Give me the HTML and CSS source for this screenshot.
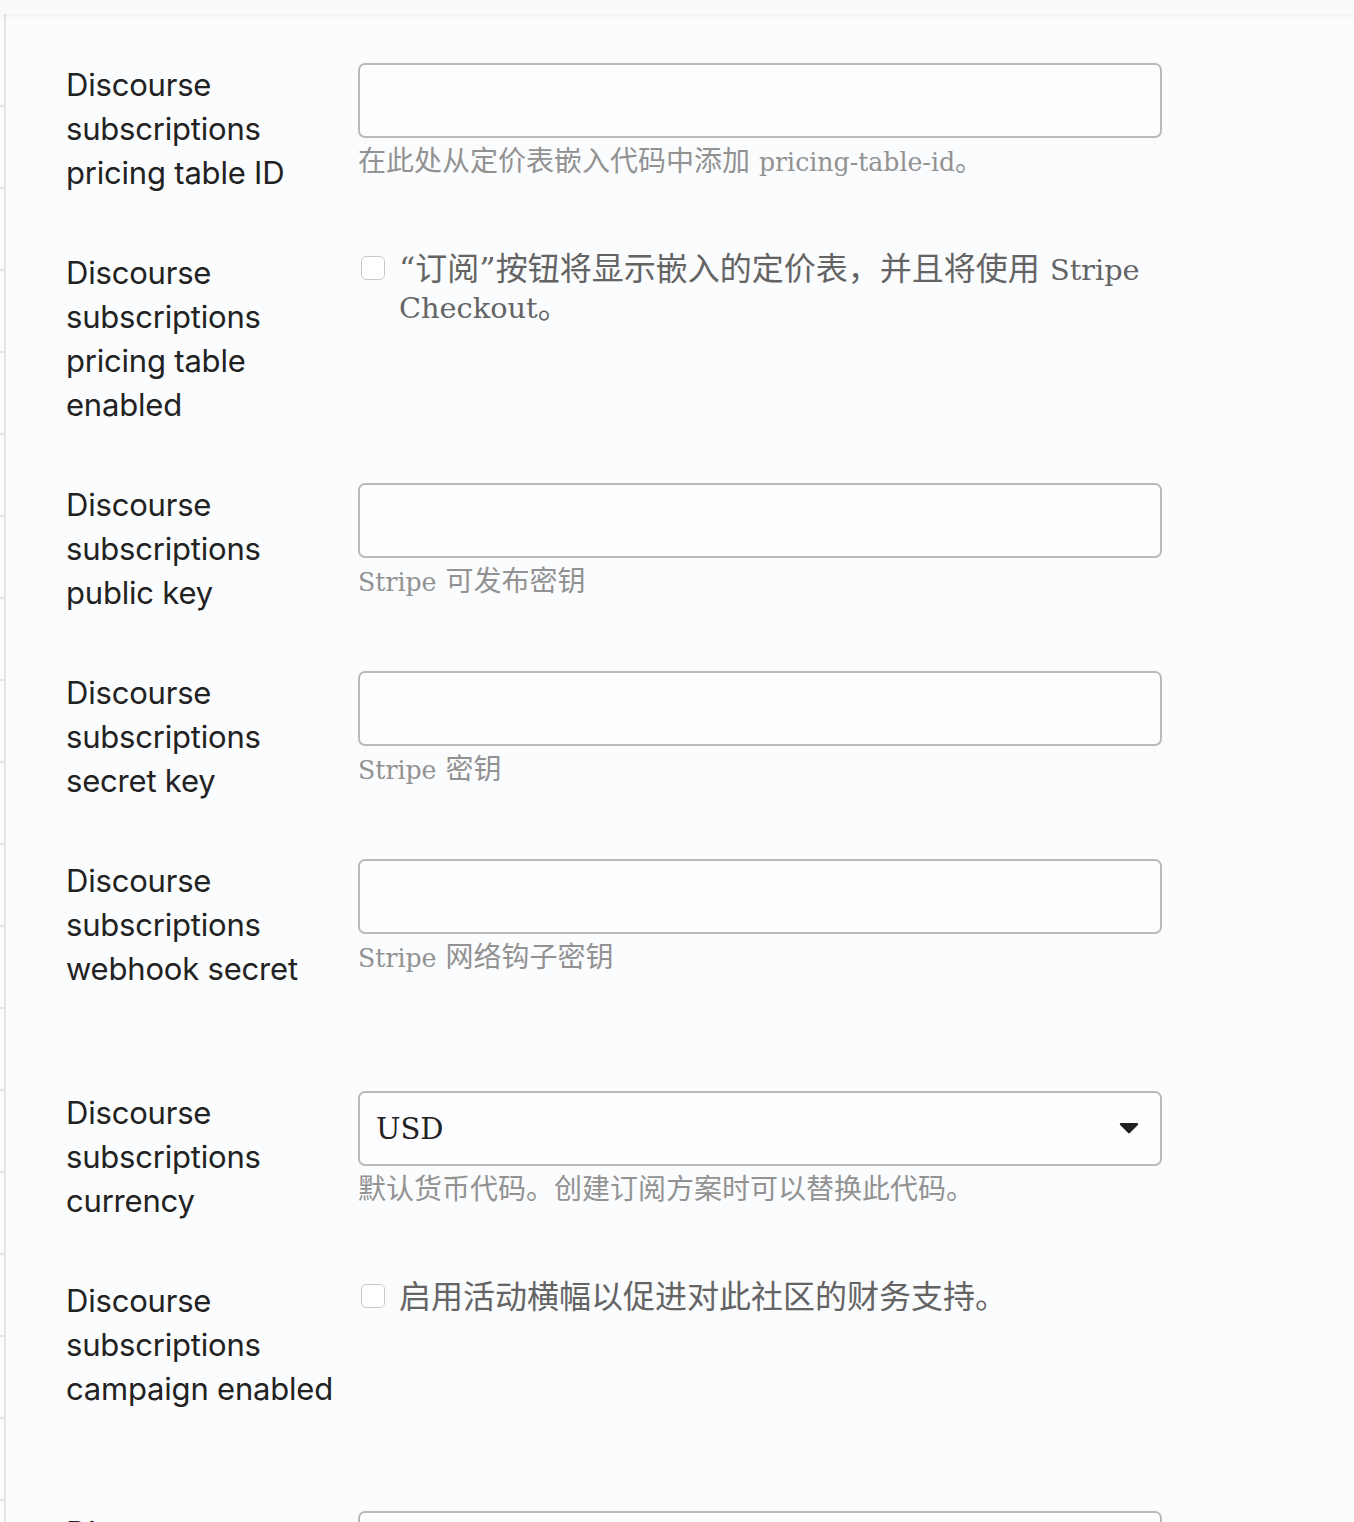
FILE: index.html
```html
<!DOCTYPE html>
<html lang="zh-CN">
<head>
<meta charset="utf-8">
<title>Settings</title>
<link rel="stylesheet" href="styles.css">
</head>
<body>
<header class="topbar"></header>
<div class="layout">
  <nav class="rail">
    <span class="rail-item"></span><span class="rail-item"></span><span class="rail-item"></span>
    <span class="rail-item"></span><span class="rail-item"></span><span class="rail-item"></span>
    <span class="rail-item"></span><span class="rail-item"></span><span class="rail-item"></span>
    <span class="rail-item"></span><span class="rail-item"></span><span class="rail-item"></span>
    <span class="rail-item"></span><span class="rail-item"></span><span class="rail-item"></span>
    <span class="rail-item"></span><span class="rail-item"></span><span class="rail-item"></span>
  </nav>
  <main class="settings">
    <div class="row">
      <div class="label">Discourse subscriptions pricing table ID</div>
      <div class="value">
        <div class="input"></div>
        <div class="help">在此处从定价表嵌入代码中添加 <span class="lat">pricing-table-id</span>。</div>
      </div>
    </div>

    <div class="row">
      <div class="label">Discourse subscriptions pricing table enabled</div>
      <div class="value check">
        <span class="box"></span>
        <div class="check-text">“订阅”按钮将显示嵌入的定价表，并且将使用 <span class="lat">Stripe Checkout</span>。</div>
      </div>
    </div>

    <div class="row">
      <div class="label">Discourse subscriptions public key</div>
      <div class="value">
        <div class="input"></div>
        <div class="help"><span class="lat">Stripe</span> 可发布密钥</div>
      </div>
    </div>

    <div class="row">
      <div class="label">Discourse subscriptions secret key</div>
      <div class="value">
        <div class="input"></div>
        <div class="help"><span class="lat">Stripe</span> 密钥</div>
      </div>
    </div>

    <div class="row row-spaced">
      <div class="label">Discourse subscriptions webhook secret</div>
      <div class="value">
        <div class="input"></div>
        <div class="help"><span class="lat">Stripe</span> 网络钩子密钥</div>
      </div>
    </div>

    <div class="row">
      <div class="label">Discourse subscriptions currency</div>
      <div class="value">
        <div class="input select">
          <span class="select-text lat">USD</span>
          <svg class="caret" width="20" height="13" viewBox="0 0 20 13"><path d="M2 1h16a1.2 1.2 0 0 1 .85 2.05l-8 8a1.2 1.2 0 0 1-1.7 0l-8-8A1.2 1.2 0 0 1 2 1z" fill="#1f1f1f"/></svg>
        </div>
        <div class="help">默认货币代码。创建订阅方案时可以替换此代码。</div>
      </div>
    </div>

    <div class="row row-spaced">
      <div class="label">Discourse subscriptions campaign enabled</div>
      <div class="value check">
        <span class="box"></span>
        <div class="check-text">启用活动横幅以促进对此社区的财务支持。</div>
      </div>
    </div>

    <div class="row">
      <div class="label">Discourse subscriptions campaign goal</div>
      <div class="value">
        <div class="input"></div>
        <div class="help">活动目标</div>
      </div>
    </div>
  </main>
</div>
</body>
</html>
```

FILE: styles.css
```css
html, body {
  margin: 0;
  padding: 0;
  background: #fbfcfe;
}
body {
  overflow: hidden;
  height: 1522px;
}
.topbar {
  height: 14px;
  background: #fafafc;
  box-shadow: 0 2px 6px rgba(0, 0, 0, 0.05);
  position: relative;
  z-index: 2;
}
.layout {
  display: flex;
  min-height: 1508px;
}
.rail {
  width: 4px;
  flex: none;
  border-right: 2px solid #e6e6e8;
  display: flex;
  flex-direction: column;
  padding-top: 91px;
  gap: 80px;
}
.rail-item {
  display: block;
  height: 2px;
  background: #e6e6e8;
}
.settings {
  padding: 49px 0 0 60px;
}
.row {
  display: grid;
  grid-template-columns: 280px 804px;
  column-gap: 12px;
  margin-bottom: 56px;
  align-items: start;
}
.row-spaced {
  margin-bottom: 100px;
}
.label {
  font-family: Inter, "Noto Sans", sans-serif;
  font-size: 31px;
  letter-spacing: -0.2px;
  line-height: 44px;
  color: #222;
}
.input {
  box-sizing: border-box;
  height: 75px;
  border: 2px solid #bababa;
  border-radius: 7px;
  background: #fdfdff;
}
.help {
  margin-top: 4px;
  font-family: "DejaVu Serif", "Noto Sans CJK SC", sans-serif;
  font-size: 28px;
  line-height: 40px;
  color: #929292;
}
.lat {
  font-family: "DejaVu Serif", serif;
  font-size: 0.9em;
}
.check {
  display: flex;
  align-items: flex-start;
}
.box {
  flex: none;
  box-sizing: border-box;
  width: 24px;
  height: 24px;
  margin: 5px 14px 0 3px;
  border: 1.5px solid #c9c9c9;
  border-radius: 5px;
  background: #fff;
}
.check-text {
  font-family: "DejaVu Serif", "Noto Sans CJK SC", sans-serif;
  font-size: 32px;
  line-height: 37px;
  color: #646464;
}
.select {
  display: flex;
  align-items: center;
  justify-content: space-between;
  padding: 0 21px 0 16px;
}
.select-text {
  font-size: 29px;
  color: #222;
}
.caret {
  display: block;
}
```
